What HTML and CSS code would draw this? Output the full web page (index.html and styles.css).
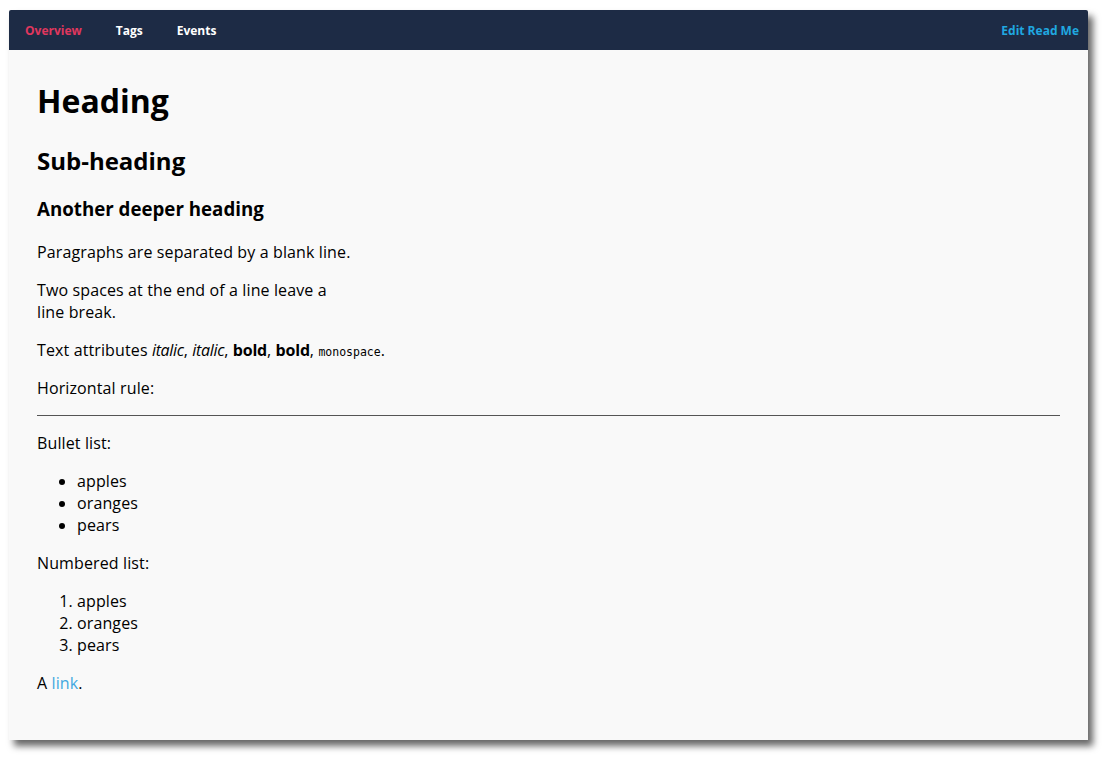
FILE: index.html
```html
<!DOCTYPE html>
<html>
<head>
<meta charset="utf-8">
<link rel="stylesheet" href="styles.css">
</head>
<body>
<div class="window">
  <nav class="navbar">
    <div class="nav-left">
      <a class="nav-link active">Overview</a>
      <a class="nav-link">Tags</a>
      <a class="nav-link">Events</a>
    </div>
    <a class="nav-edit">Edit Read Me</a>
  </nav>
  <main class="content">
    <h1>Heading</h1>
    <h2>Sub-heading</h2>
    <h3>Another deeper heading</h3>
    <p>Paragraphs are separated by a blank line.</p>
    <p>Two spaces at the end of a line leave a<br>line break.</p>
    <p>Text attributes <em>italic</em>, <em>italic</em>, <strong>bold</strong>, <strong>bold</strong>, <code>monospace</code>.</p>
    <p>Horizontal rule:</p>
    <hr>
    <p>Bullet list:</p>
    <ul>
      <li>apples</li>
      <li>oranges</li>
      <li>pears</li>
    </ul>
    <p>Numbered list:</p>
    <ol>
      <li>apples</li>
      <li>oranges</li>
      <li>pears</li>
    </ol>
    <p>A <a class="link" href="#">link</a>.</p>
  </main>
</div>
</body>
</html>
```

FILE: styles.css
```css
html, body {
  margin: 0;
  padding: 0;
  background: #ffffff;
}
body {
  box-sizing: border-box;
  min-height: 763px;
  padding: 10px 0 0 9px;
  font-family: "Open Sans", "Noto Sans", sans-serif;
}
.window {
  width: 1079px;
  height: 730px;
  background: #f9f9f9;
  box-shadow: 5px 6px 7px rgba(0, 0, 0, 0.6);
  border-radius: 2px 2px 0 0;
  overflow: hidden;
  display: flex;
  flex-direction: column;
}
.navbar {
  height: 40px;
  flex: none;
  background: #1d2b45;
  display: flex;
  align-items: center;
  justify-content: space-between;
  padding: 0 9px 0 16px;
  font-size: 12px;
  font-weight: 700;
}
.nav-left {
  display: flex;
  gap: 34px;
}
.nav-link {
  color: #ffffff;
}
.nav-link.active {
  color: #e0375e;
}
.nav-edit {
  color: #20a8e0;
}
.content {
  padding: 29px 28px 0 28px;
  font-size: 16px;
  line-height: 22px;
  letter-spacing: 0.12px;
  color: #000;
}
h1 {
  font-size: 32px;
  line-height: 44px;
  margin: 0 0 21px;
  font-weight: 700;
  letter-spacing: 0;
}
h2 {
  font-size: 24px;
  line-height: 33px;
  margin: 0 0 18px;
  font-weight: 700;
  letter-spacing: 0;
}
h3 {
  font-size: 18.72px;
  line-height: 28px;
  margin: 0 0 18px;
  font-weight: 700;
  letter-spacing: 0;
}
p {
  margin: 0 0 16px;
}
em {
  letter-spacing: -0.3px;
}
strong {
  letter-spacing: -0.2px;
}
code {
  font-family: "DejaVu Sans Mono", monospace;
  font-size: 11.5px;
  line-height: 1;
  letter-spacing: 0;
}
hr {
  border: 0;
  border-top: 1px solid #555;
  margin: 0 0 16px;
  height: 0;
}
ul, ol {
  margin: 0 0 16px;
  padding-left: 40px;
}
.link {
  color: #42a8e0;
  text-decoration: none;
}
```
